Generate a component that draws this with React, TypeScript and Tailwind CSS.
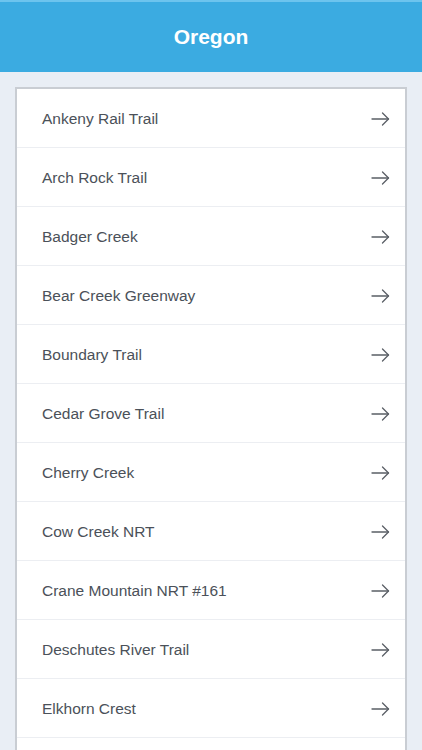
import React from 'react';

const trails = [
  'Ankeny Rail Trail',
  'Arch Rock Trail',
  'Badger Creek',
  'Bear Creek Greenway',
  'Boundary Trail',
  'Cedar Grove Trail',
  'Cherry Creek',
  'Cow Creek NRT',
  'Crane Mountain NRT #161',
  'Deschutes River Trail',
  'Elkhorn Crest',
];

function Arrow() {
  return (
    <svg width="19" height="14" viewBox="0 0 19 14" fill="none" stroke="#5a5f66" strokeWidth="1.3" strokeLinecap="round" strokeLinejoin="round">
      <path d="M1 7h16.5" />
      <path d="M11.5 1l6 6-6 6" />
    </svg>
  );
}

export default function App() {
  return (
    <div className="min-h-screen bg-[#e9eef5]" style={{ fontFamily: '"Liberation Sans", Arial, sans-serif' }}>
      <header className="h-[72px] bg-[#3babe1] border-t-2 border-[#6cc4ee] flex items-center justify-center">
        <h1 className="text-[21px] font-bold text-white">Oregon</h1>
      </header>

      <div className="mx-[15px] mt-[15px] bg-white border-2 border-b-0 border-[#c9cdd3]">
        {trails.map((t) => (
          <div key={t} className="h-[59px] flex items-center justify-between pl-[25px] pr-[15px] pt-[2px] border-b border-[#eceef2]">
            <span className="text-[15.5px] text-[#4b5159]">{t}</span>
            <Arrow />
          </div>
        ))}
        <div className="h-[59px]" />
      </div>
    </div>
  );
}
